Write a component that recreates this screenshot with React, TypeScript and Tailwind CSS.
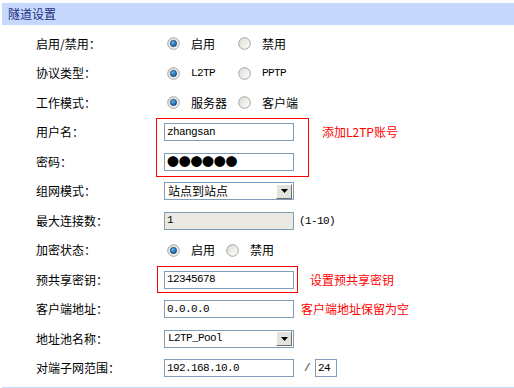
import React from 'react';

const cjk = "font-['Noto_Sans_CJK_SC','Noto_Sans',sans-serif]";
const mono = "font-['Liberation_Mono','Noto_Sans_CJK_SC',monospace] text-[11px] tracking-[-0.6px]";

function Radio({ checked }: { checked?: boolean }) {
  return (
    <svg width="13" height="13" viewBox="0 0 13 13" className="shrink-0">
      <defs>
        <linearGradient id="rg" x1="0" y1="0" x2="1" y2="1">
          <stop offset="0" stopColor="#dcdcd4" />
          <stop offset="1" stopColor="#ffffff" />
        </linearGradient>
        <radialGradient id="dot" cx="0.4" cy="0.35" r="0.7">
          <stop offset="0" stopColor="#5fb0ea" />
          <stop offset="1" stopColor="#0b4f8f" />
        </radialGradient>
      </defs>
      <circle cx="6.5" cy="6.5" r="5.8" fill="url(#rg)" stroke="#a3a3a3" strokeWidth="1" />
      {checked && <circle cx="6.5" cy="6.5" r="3.2" fill="url(#dot)" stroke="#1d3f6e" strokeWidth="0.6" />}
    </svg>
  );
}

function RadioGroup({ a, b, latin, narrow }: { a: string; b: string; latin?: boolean; narrow?: boolean }) {
  const txt = latin ? mono : `${cjk} text-[12px]`;
  return (
    <div className="flex items-center ml-[3px]">
      <div className={`flex items-center ${narrow ? 'w-[59px]' : 'w-[71px]'}`}>
        <Radio checked />
        <span className={`ml-[11px] ${txt}`}>{a}</span>
      </div>
      <Radio />
      <span className={`ml-[11px] ${txt}`}>{b}</span>
    </div>
  );
}

function TextBox({ value, disabled, w = 'w-[130px]', children }: { value?: string; disabled?: boolean; w?: string; children?: React.ReactNode }) {
  return (
    <div className={`${w} h-[18px] border border-[#7f9db9] flex items-center px-[2px] ${disabled ? 'bg-[#ebeae2]' : 'bg-white'}`}>
      {children ?? <span className={`${mono} leading-none`}>{value}</span>}
    </div>
  );
}

function Select({ value, cn }: { value: string; cn?: boolean }) {
  return (
    <div className="w-[130px] h-[18px] border border-[#7f9db9] flex items-center bg-white pl-[3px] pr-[1px]">
      <span className={`flex-1 leading-none ${cn ? `${cjk} text-[12px]` : mono}`}>{value}</span>
      <div className="w-[16px] h-[15px] bg-[#e4e2dc] border border-t-[#ffffff] border-l-[#ffffff] border-r-[#716f64] border-b-[#716f64] flex items-center justify-center">
        <svg width="7" height="4" viewBox="0 0 7 4">
          <polygon points="0,0 7,0 3.5,4" fill="#000" />
        </svg>
      </div>
    </div>
  );
}

function Row({ label, children }: { label: string; children: React.ReactNode }) {
  return (
    <div className="h-[29.5px] flex items-center">
      <div className={`w-[162px] pl-[34px] ${cjk} text-[12px] text-black`}>{label}</div>
      {children}
    </div>
  );
}

const note = `${cjk} text-[12px] text-[#ff0000]`;

export default function App() {
  return (
    <div className="w-[514px] h-[388px] overflow-hidden bg-white pt-[3px] pl-[2px] text-black">
      <div className="h-[22px] bg-[#c6d9fc] flex items-center pl-[6px]">
        <span className={`${cjk} text-[12px] text-[#1b2a80]`}>隧道设置</span>
      </div>
      <div className="pt-[4px]">
        <Row label="启用/禁用：">
          <RadioGroup a="启用" b="禁用" />
        </Row>
        <Row label="协议类型：">
          <RadioGroup a="L2TP" b="PPTP" latin />
        </Row>
        <Row label="工作模式：">
          <RadioGroup a="服务器" b="客户端" />
        </Row>
        <div className="relative">
          <Row label="用户名：">
            <TextBox value="zhangsan" />
            <span className={`ml-[28px] ${note}`}>添加L2TP账号</span>
          </Row>
          <Row label="密码：">
            <TextBox>
              <span className={`${cjk} text-[12px] leading-none tracking-[-0.3px]`}>●●●●●●</span>
            </TextBox>
          </Row>
          <div className="absolute left-[154px] top-0 w-[153px] h-[59px] border border-[#ff0000] pointer-events-none" />
        </div>
        <Row label="组网模式：">
          <Select value="站点到站点" cn />
        </Row>
        <Row label="最大连接数：">
          <TextBox value="1" disabled />
          <span className={`ml-[5px] ${mono}`}>(1-10)</span>
        </Row>
        <Row label="加密状态：">
          <RadioGroup a="启用" b="禁用" narrow />
        </Row>
        <div className="relative">
          <Row label="预共享密钥：">
            <TextBox value="12345678" />
            <span className={`ml-[16px] ${note}`}>设置预共享密钥</span>
          </Row>
          <div className="absolute left-[155px] top-[1px] w-[141px] h-[27px] border border-[#ff0000] pointer-events-none" />
        </div>
        <Row label="客户端地址：">
          <TextBox value="0.0.0.0" />
          <span className={`ml-[7px] ${note}`}>客户端地址保留为空</span>
        </Row>
        <Row label="地址池名称：">
          <Select value="L2TP_Pool" />
        </Row>
        <Row label="对端子网范围：">
          <TextBox value="192.168.10.0" />
          <span className={`ml-[10px] ${mono} text-[#333]`}>/</span>
          <div className="ml-[5px]">
            <TextBox value="24" w="w-[22px]" />
          </div>
        </Row>
      </div>
      <div className="mt-[4px] h-[2px] bg-[#c6d9f5]" />
    </div>
  );
}
